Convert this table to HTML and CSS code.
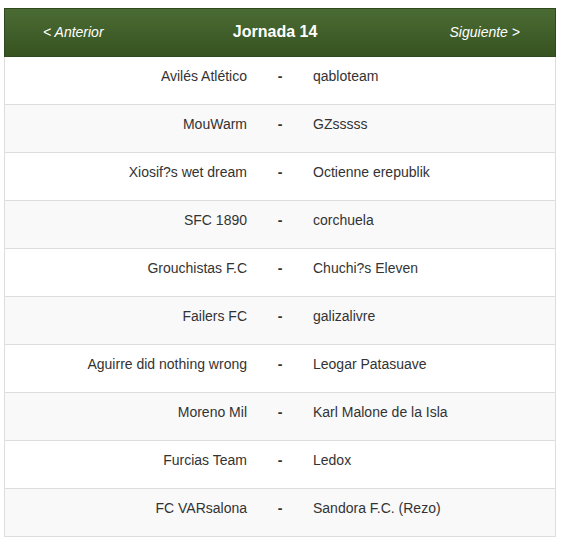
FILE: index.html
```html
<!DOCTYPE html>
<html lang="es">
<head>
<meta charset="utf-8">
<title>Jornada 14</title>
<link rel="stylesheet" href="styles.css">
</head>
<body>
<div class="panel">
  <div class="round-nav">
    <a class="nav-link" href="#">&lt; Anterior</a>
    <span class="round-title">Jornada 14</span>
    <a class="nav-link" href="#">Siguiente &gt;</a>
  </div>
  <table class="matches">
    <tbody>
      <tr><td class="home">Avilés Atlético</td><td class="sep">-</td><td class="away">qabloteam</td></tr>
      <tr><td class="home">MouWarm</td><td class="sep">-</td><td class="away">GZsssss</td></tr>
      <tr><td class="home">Xiosif?s wet dream</td><td class="sep">-</td><td class="away">Octienne erepublik</td></tr>
      <tr><td class="home">SFC 1890</td><td class="sep">-</td><td class="away">corchuela</td></tr>
      <tr><td class="home">Grouchistas F.C</td><td class="sep">-</td><td class="away">Chuchi?s Eleven</td></tr>
      <tr><td class="home">Failers FC</td><td class="sep">-</td><td class="away">galizalivre</td></tr>
      <tr><td class="home">Aguirre did nothing wrong</td><td class="sep">-</td><td class="away">Leogar Patasuave</td></tr>
      <tr><td class="home">Moreno Mil</td><td class="sep">-</td><td class="away">Karl Malone de la Isla</td></tr>
      <tr><td class="home">Furcias Team</td><td class="sep">-</td><td class="away">Ledox</td></tr>
      <tr><td class="home">FC VARsalona</td><td class="sep">-</td><td class="away">Sandora F.C. (Rezo)</td></tr>
    </tbody>
  </table>
</div>
</body>
</html>
```

FILE: styles.css
```css
html, body {
  margin: 0;
  padding: 0;
  background: #fff;
}

body {
  font-family: "Liberation Sans", Arial, sans-serif;
  font-size: 14px;
  line-height: 20px;
  color: #333;
}

.panel {
  width: 552px;
  margin: 8px 0 0 4px;
}

.round-nav {
  box-sizing: border-box;
  height: 49px;
  display: flex;
  align-items: center;
  justify-content: space-between;
  padding: 0 35px 1px 38px;
  background: linear-gradient(to bottom, #4b6b35 0%, #37531f 100%);
  border: 1px solid #2f481d;
  color: #fff;
}

.nav-link {
  color: #fff;
  font-style: italic;
  text-decoration: none;
  font-size: 14px;
}

.round-title {
  font-weight: bold;
  font-size: 16px;
  margin-right: 3px;
}

.matches {
  width: 552px;
  border-collapse: separate;
  border-spacing: 0;
  table-layout: fixed;
  border-left: 1px solid #ddd;
  border-right: 1px solid #ddd;
}

.matches tr:nth-child(even) td {
  background: #f9f9f9;
}

.matches td {
  height: 48px;
  box-sizing: border-box;
  padding: 9px 8px 18px 8px;
  vertical-align: top;
  white-space: nowrap;
  border-bottom: 1px solid #ddd;
}

.matches .home {
  width: 250px;
  text-align: right;
  padding-right: 8px;
}

.matches .sep {
  width: 50px;
  text-align: center;
  font-weight: bold;
  padding-left: 0;
  padding-right: 0;
}

.matches .away {
  width: 250px;
  text-align: left;
}
```
